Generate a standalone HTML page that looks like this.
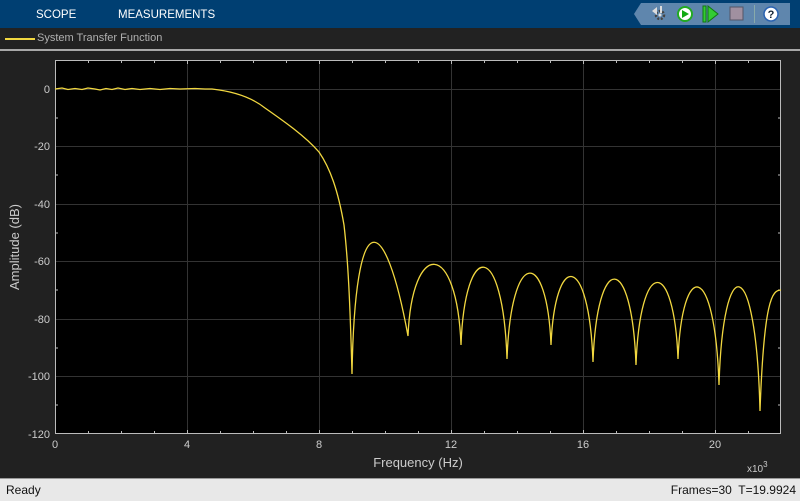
<!DOCTYPE html>
<html><head><meta charset="utf-8"><style>
body{margin:0;width:800px;height:500px;background:#212121;overflow:hidden;font-family:"Liberation Sans",sans-serif;position:relative}
.top{position:absolute;left:0;top:0;width:800px;height:28px;background:#003f72}
.t{position:absolute;color:#fff;font-size:11.5px;top:9px}
.legend{position:absolute;top:28px;left:0;width:800px;height:21px;background:#222;border-bottom:2px solid #a8a8a8}
.status{position:absolute;top:478px;left:0;width:800px;height:22px;background:#e8e8e8;border-top:1px solid #999;font-size:12px;color:#111}
</style></head><body>
<div class="top">
<div class="t" style="left:36px">SCOPE</div>
<div class="t" style="left:118px">MEASUREMENTS</div>
</div>
<svg style="position:absolute;left:0;top:0" width="800" height="28">
<polygon points="641,3 790,3 790,25 641,25 634,14" fill="#5f86ad"/>
<circle cx="660" cy="15" r="4" fill="none" stroke="#444" stroke-width="2.5" stroke-dasharray="2 1.5"/>
<circle cx="660" cy="15" r="1.5" fill="#ddd"/>
<polygon points="652,11 657,7 657,15" fill="#ddd"/>
<rect x="660" y="6" width="2" height="7" fill="#ddd"/>
<circle cx="685" cy="14" r="7" fill="#fff" stroke="#2a2" stroke-width="2"/>
<polygon points="682,10 682,18 689,14" fill="#1a1"/>
<rect x="703" y="6" width="3" height="16" fill="#3c3" stroke="#171"/>
<polygon points="708,6 708,22 718,14" fill="#3c3" stroke="#171"/>
<rect x="730" y="7" width="13" height="13" fill="#a090a0" stroke="#556"/>
<rect x="754" y="5" width="1" height="18" fill="#8aa"/>
<circle cx="771" cy="14" r="7" fill="#fff" stroke="#2a62b0" stroke-width="1.5"/>
<text x="771" y="18" font-size="11" font-weight="bold" text-anchor="middle" fill="#123" font-family="Liberation Sans">?</text>
</svg>
<div class="legend"><div style="position:absolute;left:5px;top:10px;width:30px;height:2px;background:#f2d840"></div><div style="position:absolute;left:37px;top:4px;font-size:11px;color:#b0b0b0">System Transfer Function</div></div>
<svg style="position:absolute;left:0;top:0" width="800" height="478" font-family="Liberation Sans" fill="#ccc">
<rect x="55" y="60" width="726" height="374" fill="#000"/>
<g stroke="#333" stroke-width="1">
<path d="M187.5 60V434M319.5 60V434M451.5 60V434M583.5 60V434M715.5 60V434"/>
<path d="M55 89.5H781M55 146.5H781M55 204.5H781M55 261.5H781M55 319.5H781M55 376.5H781"/>
</g>
<g stroke="#bbb" stroke-width="1">
<path d="M88.5 60v3M121.5 60v3M154.5 60v3M187.5 60v4M220.5 60v3M253.5 60v3M286.5 60v3M319.5 60v4M352.5 60v3M385.5 60v3M418.5 60v3M451.5 60v4M484.5 60v3M517.5 60v3M550.5 60v3M583.5 60v4M616.5 60v3M649.5 60v3M682.5 60v3M715.5 60v4M748.5 60v3"/>
<path d="M88.5 434v-3M121.5 434v-3M154.5 434v-3M187.5 434v-4M220.5 434v-3M253.5 434v-3M286.5 434v-3M319.5 434v-4M352.5 434v-3M385.5 434v-3M418.5 434v-3M451.5 434v-4M484.5 434v-3M517.5 434v-3M550.5 434v-3M583.5 434v-4M616.5 434v-3M649.5 434v-3M682.5 434v-3M715.5 434v-4M748.5 434v-3"/>
<path d="M55 118h3M55 175h3M55 233h3M55 290h3M55 348h3M55 405h3M781 118h-3M781 175h-3M781 233h-3M781 290h-3M781 348h-3M781 405h-3"/>
<rect x="55.5" y="60.5" width="725" height="373" fill="none"/>
</g>
<path fill="none" stroke="#f2d840" stroke-width="1.3" d="M55 89 L62 88 L68 89.5 L75 88.5 L82 89.5 L88 88 L95 89 L100 90 L106 88.5 L112 89.5 L118 88 L125 89.5 L132 88.5 L140 89.5 L150 88.5 L160 89.5 L170 88.5 L180 89 L195 88.5 L205 89 L212 89 C230 91 250 96 265 108 C285 122 305 136 319 152 C330 168 338 190 344 225 C348 260 350 300 352 374 C355 200 385 210 408 336 C412 239 457 239 461 345 C465 239 503 239 507 359 C511 247 547 247 551 345 C555 251 589 251 593 362 C597 251 632 251 636 365 C640 256 674 256 678 359 C682 259 715 259 719 385 C723 250 756 250 760 411 C764 300 772 290 781 290"/>
<g font-size="11" text-anchor="end">
<text x="50" y="93">0</text><text x="50" y="150">-20</text><text x="50" y="208">-40</text><text x="50" y="265">-60</text><text x="50" y="323">-80</text><text x="50" y="380">-100</text><text x="50" y="438">-120</text>
</g>
<g font-size="11" text-anchor="middle">
<text x="55" y="448">0</text><text x="187" y="448">4</text><text x="319" y="448">8</text><text x="451" y="448">12</text><text x="583" y="448">16</text><text x="715" y="448">20</text>
</g>
<text x="418" y="467" font-size="13" text-anchor="middle">Frequency (Hz)</text>
<text x="747" y="472" font-size="10">x10<tspan dy="-5" font-size="8">3</tspan></text>
<text transform="translate(19,247) rotate(-90)" font-size="13" text-anchor="middle">Amplitude (dB)</text>
</svg>
<div class="status"><span style="position:absolute;left:6px;top:4px">Ready</span><span style="position:absolute;right:4px;top:4px">Frames=30&nbsp; T=19.9924</span></div>
</body></html>
